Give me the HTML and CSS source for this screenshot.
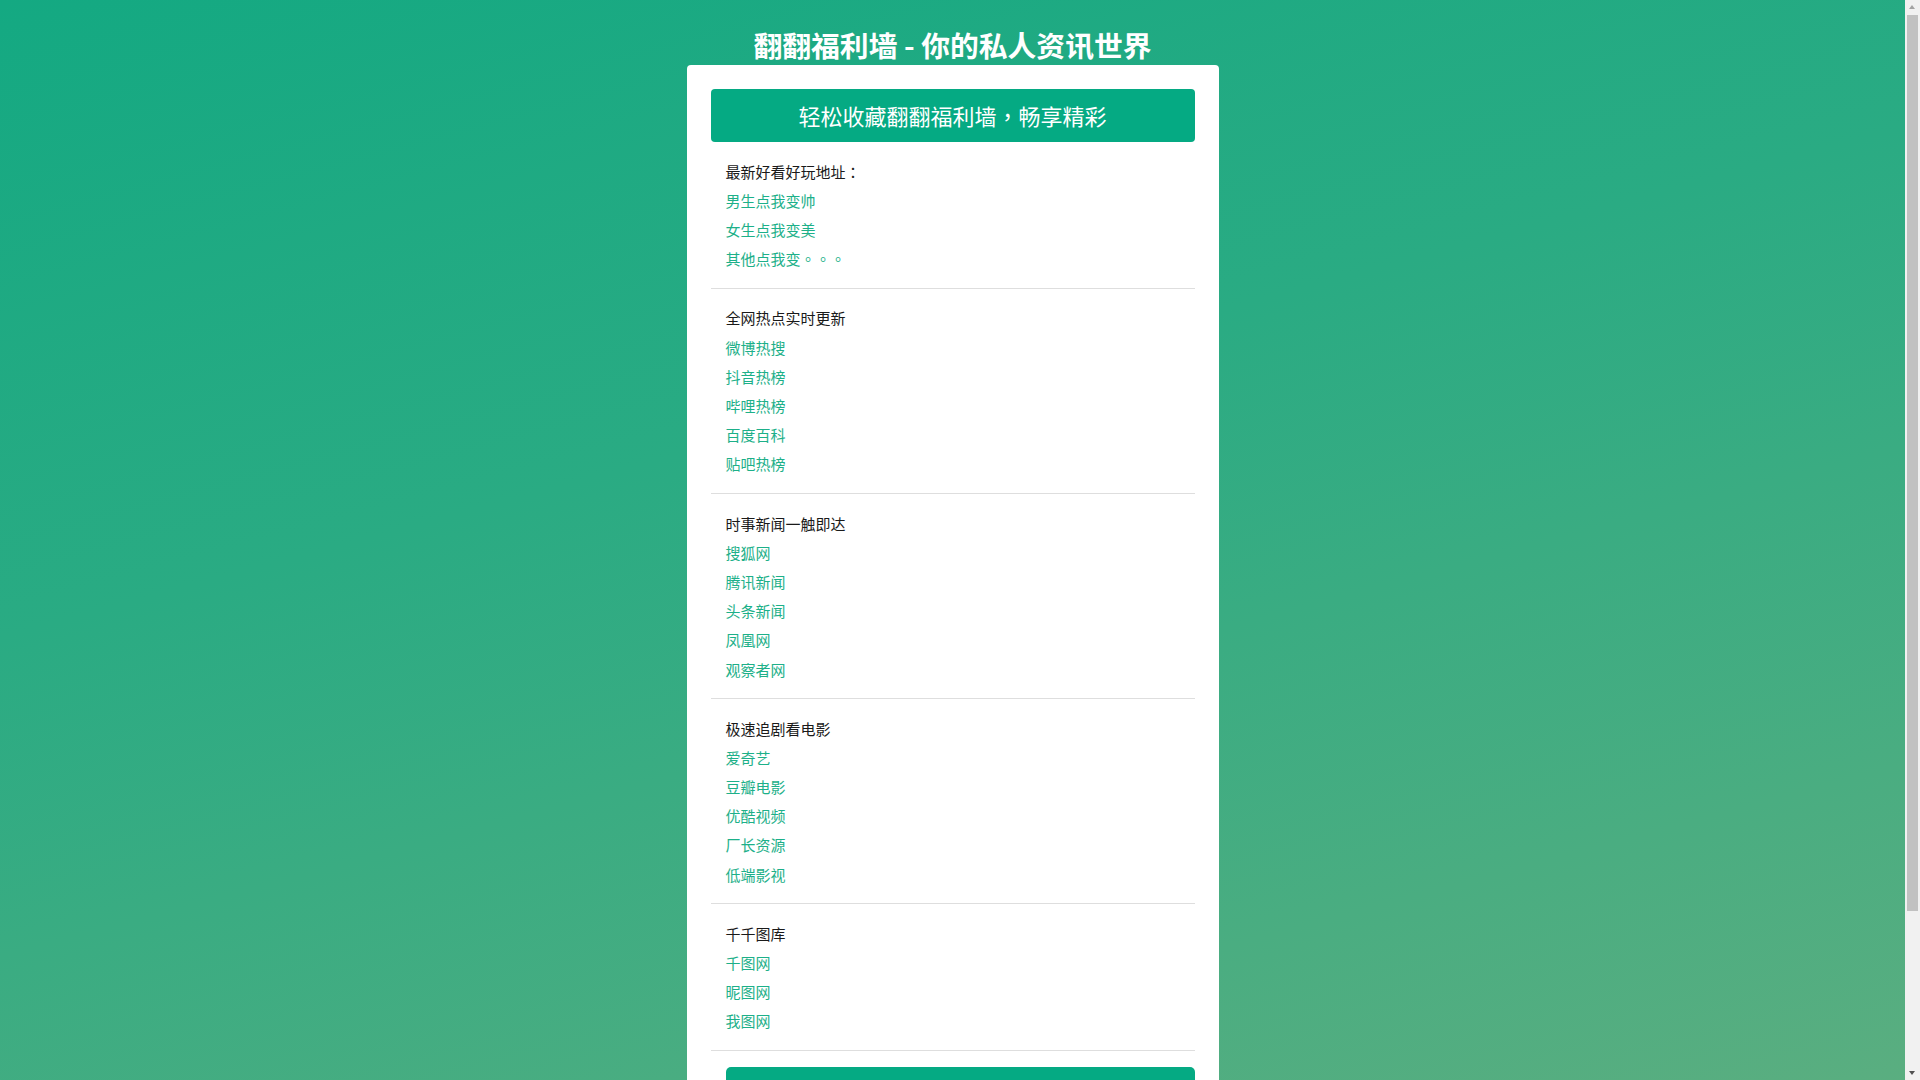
FILE: index.html
```html
<!DOCTYPE html>
<html lang="zh-CN">
<head>
<meta charset="utf-8">
<title>翻翻福利墙 - 你的私人资讯世界</title>
<link rel="stylesheet" href="styles.css">
</head>
<body>
<h1 class="site-title">翻翻福利墙 - 你的私人资讯世界</h1>
<main class="card">
  <div class="banner">轻松收藏翻翻福利墙<span class="punct" lang="zh-TW">，</span>畅享精彩</div>

  <section class="group">
    <div class="group-title">最新好看好玩地址<span class="punct" lang="zh-TW">：</span></div>
    <a class="link" href="#">男生点我变帅</a>
    <a class="link" href="#">女生点我变美</a>
    <a class="link" href="#">其他点我变<span class="punct" lang="zh-TW">。。。</span></a>
  </section>

  <section class="group">
    <div class="group-title">全网热点实时更新</div>
    <a class="link" href="#">微博热搜</a>
    <a class="link" href="#">抖音热榜</a>
    <a class="link" href="#">哔哩热榜</a>
    <a class="link" href="#">百度百科</a>
    <a class="link" href="#">贴吧热榜</a>
  </section>

  <section class="group">
    <div class="group-title">时事新闻一触即达</div>
    <a class="link" href="#">搜狐网</a>
    <a class="link" href="#">腾讯新闻</a>
    <a class="link" href="#">头条新闻</a>
    <a class="link" href="#">凤凰网</a>
    <a class="link" href="#">观察者网</a>
  </section>

  <section class="group">
    <div class="group-title">极速追剧看电影</div>
    <a class="link" href="#">爱奇艺</a>
    <a class="link" href="#">豆瓣电影</a>
    <a class="link" href="#">优酷视频</a>
    <a class="link" href="#">厂长资源</a>
    <a class="link" href="#">低端影视</a>
  </section>

  <section class="group">
    <div class="group-title">千千图库</div>
    <a class="link" href="#">千图网</a>
    <a class="link" href="#">昵图网</a>
    <a class="link" href="#">我图网</a>
  </section>

  <div class="bottom-btn"></div>
</main>

<div class="scrollbar" aria-hidden="true">
  <div class="sb-arrow sb-up"></div>
  <div class="sb-track"><div class="sb-thumb"></div></div>
  <div class="sb-arrow sb-down"></div>
</div>
</body>
</html>
```

FILE: styles.css
```css
html {
  min-height: 100%;
  background: linear-gradient(165deg, #14a982 0%, #2aab83 40%, #5aae80 100%);
  background-attachment: fixed;
}

body {
  margin: 0 15px 0 0;
  padding: 0 0 60px 0;
  font-family: "Noto Sans CJK SC", "Noto Sans", sans-serif;
  color: #222;
}

.punct {
  font-family: "Noto Sans CJK TC", "Noto Sans CJK SC", sans-serif;
}

.site-title {
  margin: 24px 0 0 0;
  font-size: 28.8px;
  line-height: 41px;
  font-weight: bold;
  color: #fff;
  text-align: center;
}

.card {
  width: 484px;
  margin: 0 auto;
  padding: 24px;
  background: #fff;
  border-radius: 4px;
}

.banner {
  height: 53.4px;
  line-height: 53px;
  background: #05aa83;
  color: #fff;
  font-size: 22px;
  text-align: center;
  border-radius: 4px;
}

.group {
  display: flex;
  flex-direction: column;
  padding: 14.3px 15px 14.6px 15px;
  border-bottom: 1px solid #dedede;
}

.group-title {
  font-size: 15px;
  line-height: 29.2px;
  color: #1a1a1a;
}

.link {
  font-size: 15px;
  line-height: 29.2px;
  color: #1db089;
  text-decoration: none;
}

.bottom-btn {
  margin: 16px 0 0 15px;
  height: 44px;
  background: #05aa83;
  border-radius: 5px;
}

/* simulated browser scrollbar */
.scrollbar {
  position: fixed;
  top: 0;
  right: 0;
  width: 15px;
  height: 100vh;
  background: #f1f1f1;
  display: flex;
  flex-direction: column;
}

.sb-arrow {
  height: 15px;
  position: relative;
}

.sb-up::after,
.sb-down::after {
  content: "";
  position: absolute;
  left: 4px;
  border-left: 3.5px solid transparent;
  border-right: 3.5px solid transparent;
}

.sb-up::after {
  top: 5px;
  border-bottom: 4px solid #a3a3a3;
}

.sb-down::after {
  top: 6px;
  border-top: 4px solid #505050;
}

.sb-track {
  flex: 1;
  padding: 0 2px;
}

.sb-thumb {
  height: 896px;
  background: #c1c1c1;
}
```
